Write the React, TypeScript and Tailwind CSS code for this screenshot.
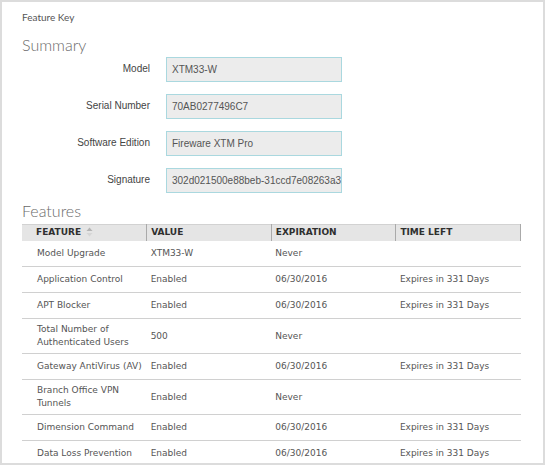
import React from 'react';

const summary = [
    { label: 'Model', value: 'XTM33-W' },
    { label: 'Serial Number', value: '70AB0277496C7' },
    { label: 'Software Edition', value: 'Fireware XTM Pro' },
    { label: 'Signature', value: '302d021500e88beb-31ccd7e08263a38f1c4e02d7' },
];

const features = [
    { name: 'Model Upgrade', value: 'XTM33-W', exp: 'Never', left: '' },
    { name: 'Application Control', value: 'Enabled', exp: '06/30/2016', left: 'Expires in 331 Days' },
    { name: 'APT Blocker', value: 'Enabled', exp: '06/30/2016', left: 'Expires in 331 Days' },
    { name: 'Total Number of Authenticated Users', value: '500', exp: 'Never', left: '' },
    { name: 'Gateway AntiVirus (AV)', value: 'Enabled', exp: '06/30/2016', left: 'Expires in 331 Days' },
    { name: 'Branch Office VPN Tunnels', value: 'Enabled', exp: 'Never', left: '' },
    { name: 'Dimension Command', value: 'Enabled', exp: '06/30/2016', left: 'Expires in 331 Days' },
    { name: 'Data Loss Prevention', value: 'Enabled', exp: '06/30/2016', left: 'Expires in 331 Days' },
];

function SortIcon() {
    return (
        <svg width="7" height="10" viewBox="0 0 7 10" className="inline-block ml-[5px] -mt-[2px] align-middle">
            <path d="M3.5 0.5 L6.5 4 L0.5 4 Z" fill="#b5b5b5" />
            <path d="M3.5 9.5 L6.5 6 L0.5 6 Z" fill="#d6d6d6" />
        </svg>
    );
}

export default function App() {
    return (
        <div className="w-[545px] h-[465px] overflow-hidden border-2 border-[#dcdcdc] bg-white px-[20px] pt-[9px]">
            <div className="text-[10px] leading-[12px] text-[#555] font-['Lato','Liberation_Sans',sans-serif]">
                Feature Key
            </div>
            <h2 className="mt-[12px] text-[16px] leading-[20px] text-[#6a6a6a] font-light font-['Lato','Liberation_Sans',sans-serif]">
                Summary
            </h2>

            <div className="mt-[2px] flex flex-col gap-[12px] font-['Liberation_Sans',Arial,sans-serif] text-[10px]">
                {summary.map(row => (
                    <div key={row.label} className="flex items-center">
                        <div className="w-[128px] text-right text-[#444] pb-[3px]">{row.label}</div>
                        <div className="ml-[16px] w-[176px] h-[25px] flex items-center px-[5px] bg-[#ececec] border border-[#aad8df] text-[#555] overflow-hidden whitespace-nowrap">
                            {row.value}
                        </div>
                    </div>
                ))}
            </div>

            <h2 className="mt-[8px] text-[16px] leading-[20px] text-[#6a6a6a] font-light font-['Lato','Liberation_Sans',sans-serif]">
                Features
            </h2>

            <table className="mt-[3px] w-[499px] table-fixed font-['DejaVu_Sans',Verdana,sans-serif] text-[9px] leading-[13px]">
                <thead>
                    <tr className="bg-[#e5e5e5] border-t border-[#d2d2d2] text-left text-[#2f2f2f] font-bold">
                        <th className="h-[16px] pl-[14px] border-r border-[#aaa]">FEATURE<SortIcon /></th>
                        <th className="h-[16px] pl-[4px] border-r border-[#aaa]">VALUE</th>
                        <th className="h-[16px] pl-[4px] border-r border-[#aaa]">EXPIRATION</th>
                        <th className="h-[16px] pl-[4px] border-r border-[#aaa]">TIME LEFT</th>
                    </tr>
                </thead>
                <tbody className="text-[#555]">
                    {features.map(f => (
                        <tr key={f.name} className="border-b border-[#d0d0d0]">
                            <td className="h-[26px] py-[4px] pl-[15px] pr-[2px] align-middle">{f.name}</td>
                            <td className="h-[26px] py-[4px] pl-[4px] align-middle">{f.value}</td>
                            <td className="h-[26px] py-[4px] pl-[4px] align-middle">{f.exp}</td>
                            <td className="h-[26px] py-[4px] pl-[4px] align-middle">{f.left}</td>
                        </tr>
                    ))}
                </tbody>
            </table>
        </div>
    );
}
